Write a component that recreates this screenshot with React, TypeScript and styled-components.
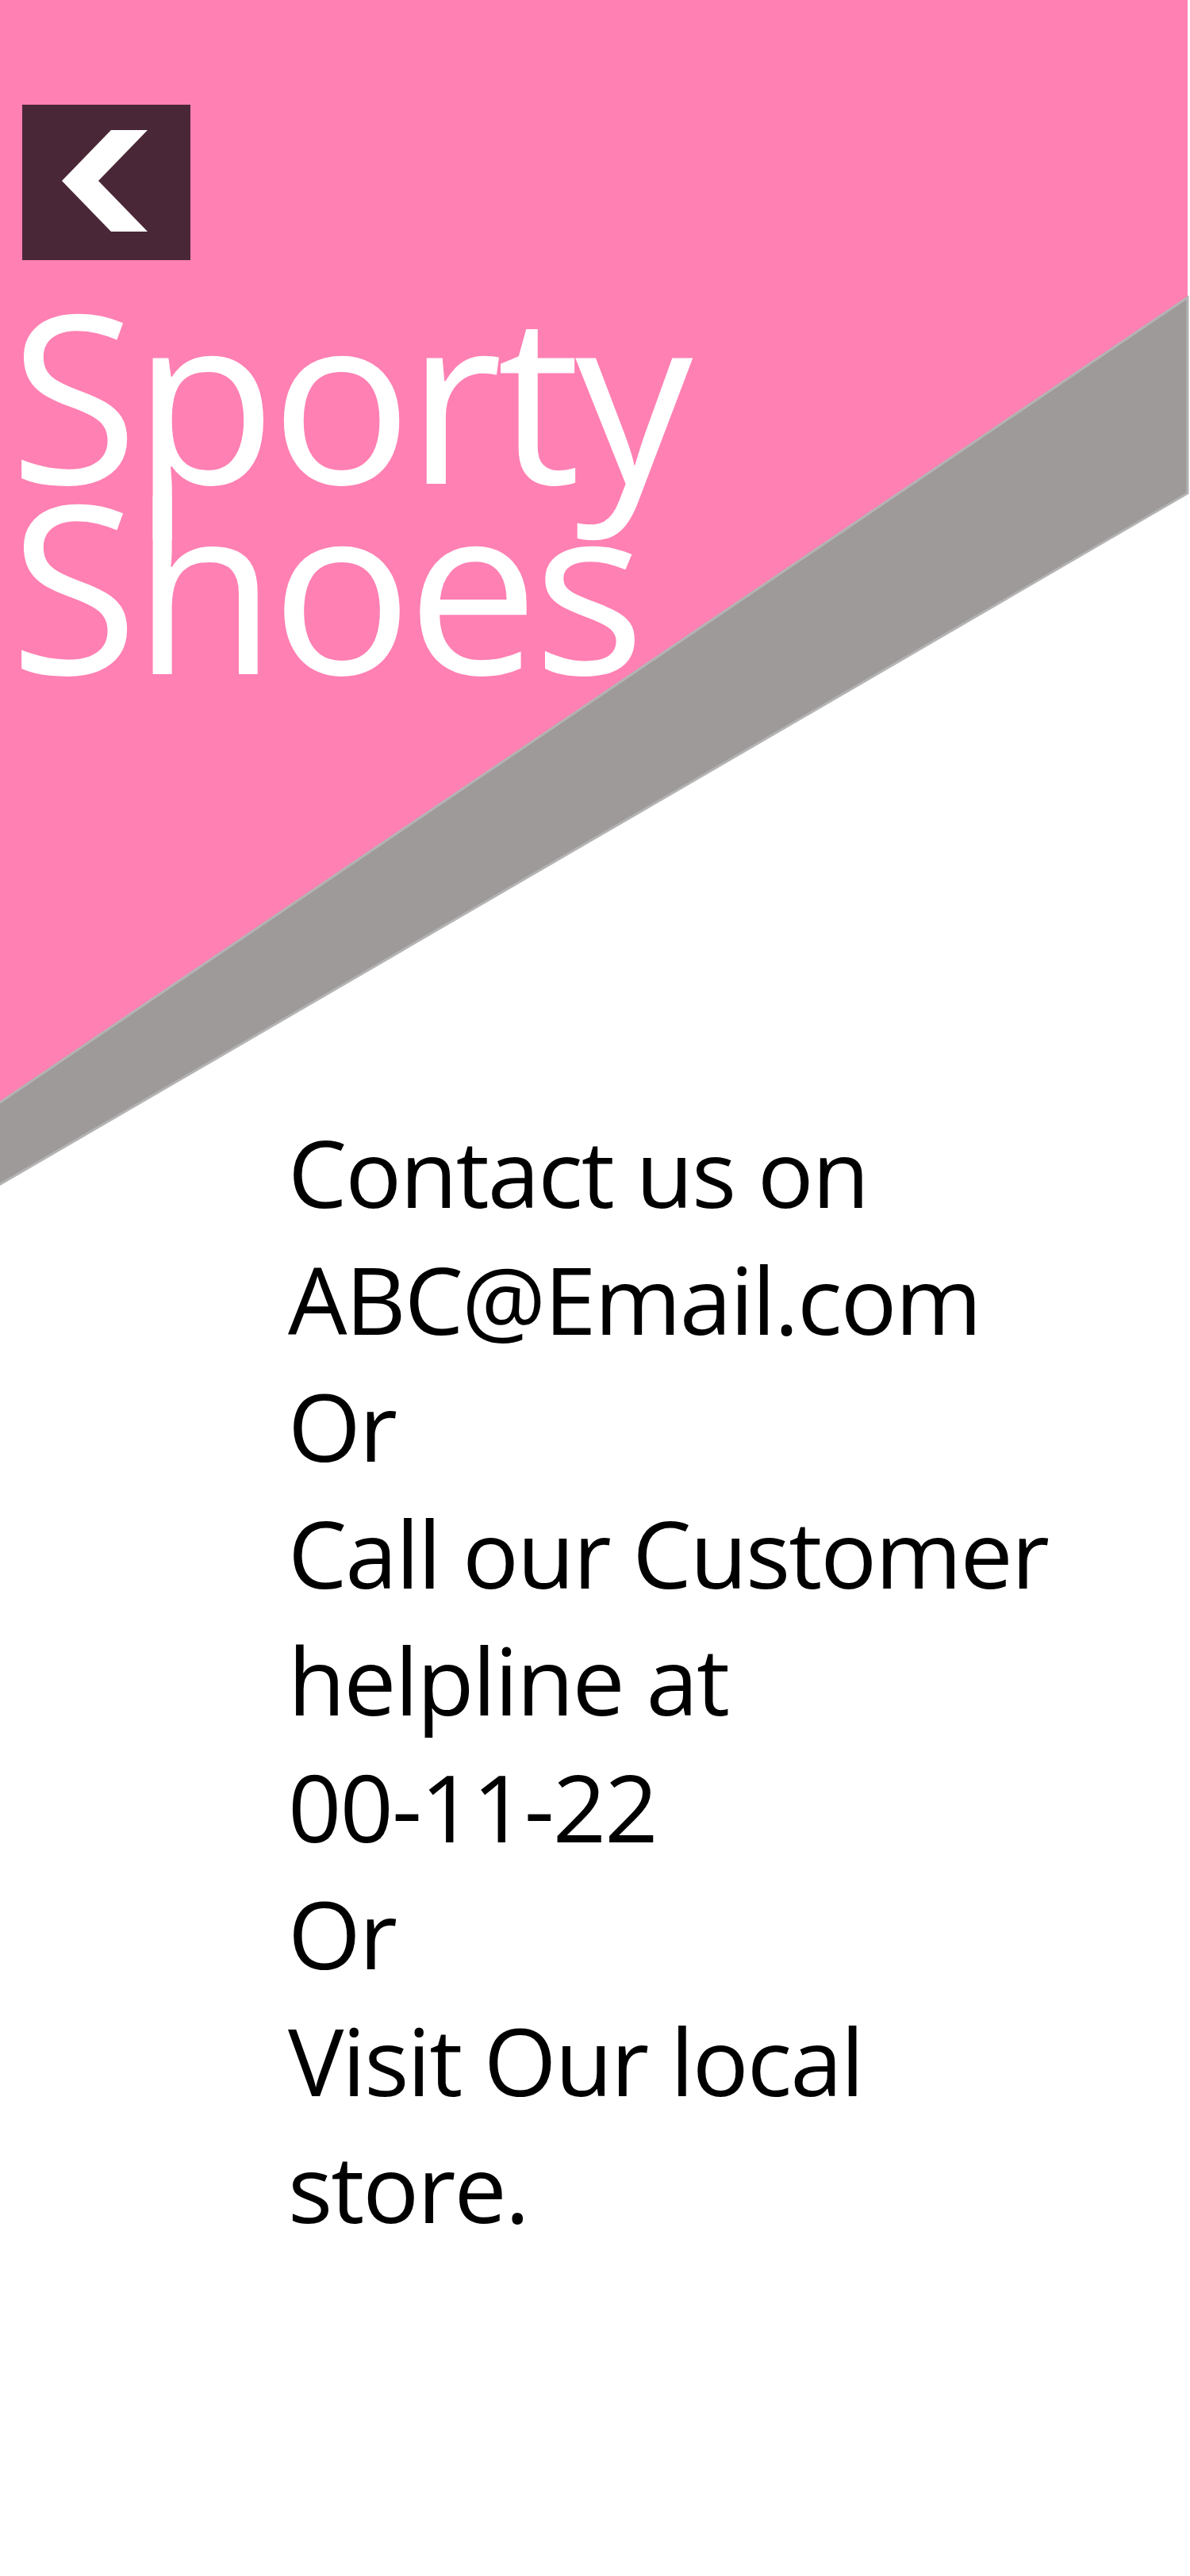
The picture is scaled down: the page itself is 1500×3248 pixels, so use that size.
import React from "react";
import styled, { createGlobalStyle } from "styled-components";

const GlobalStyle = createGlobalStyle`
  html, body {
    margin: 0;
    padding: 0;
    overflow: hidden;
    background: #ffffff;
  }
  body {
    font-family: "Open Sans", "Noto Sans", "DejaVu Sans", sans-serif;
  }
`;

const Page = styled.div`
  position: relative;
  width: 1500px;
  height: 3248px;
  overflow: hidden;
  background: #ffffff;
`;

/* decorative diagonal bands behind the content */
const Backdrop = styled.svg`
  position: absolute;
  left: 0;
  top: 0;
  width: 1500px;
  height: 1600px;
  z-index: 0;
`;

const Content = styled.main`
  position: relative;
  z-index: 1;
  display: flex;
  flex-direction: column;
  padding-top: 132px;
`;

const Header = styled.header`
  display: flex;
  flex-direction: column;
  align-items: flex-start;
  padding-left: 28px;
`;

const BackButton = styled.button`
  width: 212px;
  height: 196px;
  background: #4a2737;
  border: none;
  padding: 0;
  margin: 0;
  display: block;
  cursor: pointer;

  svg {
    display: block;
  }
`;

const Title = styled.h1`
  margin: 48px 0 0 12px;
  font-family: "Open Sans", "Noto Sans", sans-serif;
  font-weight: 400;
  font-size: 296px;
  line-height: 240px;
  letter-spacing: -7px;
  color: #ffffff;
`;

const TitleLine = styled.span`
  display: block;
  white-space: nowrap;
`;

const Contact = styled.section`
  margin: 542px 0 0 363px;
  display: flex;
  flex-direction: column;
  font-family: "Open Sans", "Noto Sans", sans-serif;
  font-size: 118px;
  line-height: 160px;
  letter-spacing: -2px;
  color: #000000;
`;

const ContactLine = styled.p`
  margin: 0;
  white-space: nowrap;
`;

const lines = [
  "Contact us on",
  "ABC@Email.com",
  "Or",
  "Call our Customer",
  "helpline at",
  "00-11-22",
  "Or",
  "Visit Our local",
  "store.",
];

export default function App() {
  return (
    <>
      <GlobalStyle />
      <Page>
        <Backdrop viewBox="0 0 1500 1600">
          <polygon points="0,0 1497,0 1497,375 0,1392" fill="#ff80b3" />
          <polygon
            points="-3,1392 1497,375 1497,622 -3,1495"
            fill="#9e9a9a"
            stroke="#b4b3b3"
            strokeWidth="3"
          />
        </Backdrop>
        <Content>
          <Header>
            <BackButton aria-label="Back">
              <svg width="212" height="196" viewBox="0 0 212 196">
                <polygon
                  points="50,96 112,32 158,32 96,96 158,160 112,160"
                  fill="#ffffff"
                />
              </svg>
            </BackButton>
          </Header>
          <Title>
            <TitleLine>Sporty</TitleLine>
            <TitleLine>Shoes</TitleLine>
          </Title>
          <Contact>
            {lines.map((l, i) => (
              <ContactLine key={i}>{l}</ContactLine>
            ))}
          </Contact>
        </Content>
      </Page>
    </>
  );
}
